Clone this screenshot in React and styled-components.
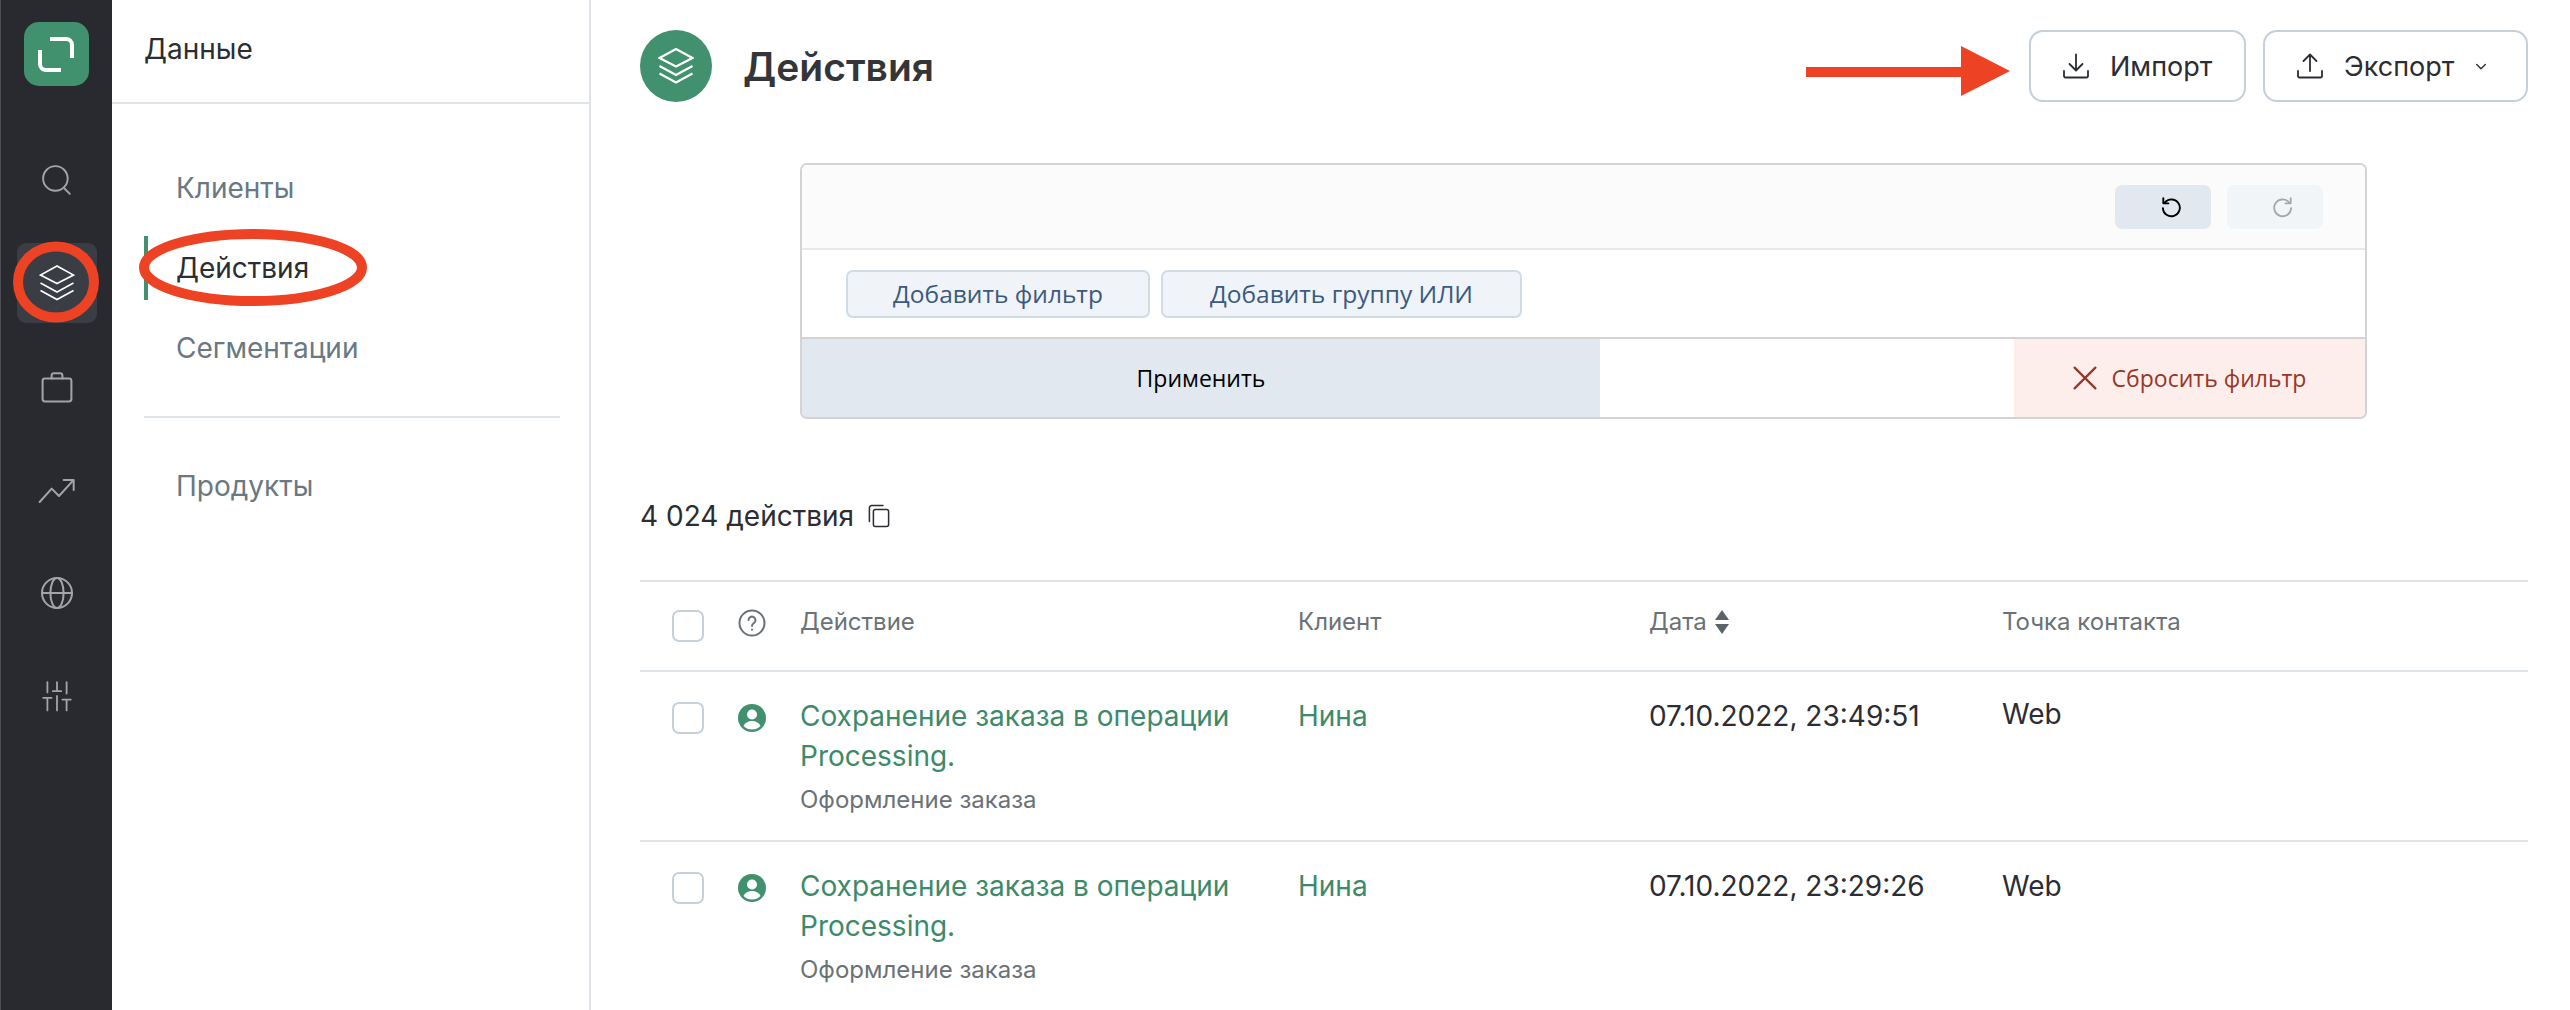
import React from "react";
import styled, { createGlobalStyle } from "styled-components";

const GREEN = "#41906e";
const BORDER = "#dfe4e8";

const Global = createGlobalStyle`
    html, body {
        margin: 0;
        padding: 0;
        background: #fff;
    }
    body {
        font-family: Inter, "Noto Sans", sans-serif;
        color: #2b2d33;
    }
    * {
        box-sizing: border-box;
    }
`;

const Page = styled.div`
    position: relative;
    display: flex;
    width: 2570px;
    height: 1010px;
    overflow: hidden;
`;

const Sidebar = styled.aside`
    flex: 0 0 112px;
    display: flex;
    flex-direction: column;
    align-items: center;
    background: #282a30;
    border-left: 1px solid #4c4e54;
    padding-top: 22px;
`;

const Logo = styled.div`
    width: 65px;
    height: 64px;
    border-radius: 15px;
    background: ${GREEN};
    margin-bottom: 54px;
    display: flex;
`;

const SideList = styled.nav`
    display: flex;
    flex-direction: column;
    gap: 23.3px;
`;

const SideItem = styled.div`
    width: 80px;
    height: 80px;
    border-radius: 9px;
    display: flex;
    align-items: center;
    justify-content: center;
    color: ${(p) => (p.$active ? "#fff" : "#a3a4a8")};
    background: ${(p) => (p.$active ? "#3a3d44" : "transparent")};
`;

const Panel = styled.section`
    flex: 0 0 479px;
    border-right: 2px solid ${BORDER};
`;

const PanelHead = styled.div`
    height: 104px;
    padding: 0 0 4px 32px;
    display: flex;
    align-items: center;
    border-bottom: 2px solid ${BORDER};
    font-size: 28px;
`;

const PanelNav = styled.div`
    padding: 52px 29px 0 32px;
`;

const NavItem = styled.div`
    height: 64px;
    margin-bottom: 16px;
    display: flex;
    align-items: center;
    font-size: 28px;
    padding-left: 28px;
    border-left: 4px solid ${(p) => (p.$active ? GREEN : "transparent")};
    color: ${(p) => (p.$active ? "#2b2d33" : "#6a7882")};
`;

const NavDivider = styled.div`
    height: 2px;
    background: ${BORDER};
    margin: 36px 0 36px;
`;

const Main = styled.main`
    flex: 1;
    min-width: 0;
    padding: 30px 42px 0 49px;
`;

const TopBar = styled.header`
    display: flex;
    align-items: center;
    height: 72px;
`;

const TitleIcon = styled.div`
    width: 72px;
    height: 72px;
    border-radius: 50%;
    background: ${GREEN};
    color: #fff;
    display: flex;
    align-items: center;
    justify-content: center;
    margin-right: 31px;
`;

const Title = styled.h1`
    margin: 0;
    font-size: 39px;
    font-weight: 600;
    color: #333538;
`;

const TopActions = styled.div`
    margin-left: auto;
    display: flex;
    gap: 17px;
`;

const OutlineButton = styled.button`
    width: ${(p) => p.$width}px;
    height: 72px;
    border: 2px solid #c5d0da;
    border-radius: 14px;
    background: #fff;
    font: inherit;
    font-size: 27px;
    color: #2b2d33;
    display: flex;
    align-items: center;
    padding: 0 0 0 30px;
    gap: 19px;
`;

const FilterBox = styled.div`
    margin: 61px 0 0 160px;
    width: 1567px;
    height: 256px;
    border: 2px solid #d3d3d3;
    border-radius: 7px;
    overflow: hidden;
    display: flex;
    flex-direction: column;
    font-family: "Open Sans", "Noto Sans", sans-serif;
`;

const HistoryRow = styled.div`
    height: 85px;
    background: #fbfbfb;
    border-bottom: 2px solid #e4e9ee;
    display: flex;
    justify-content: flex-end;
    align-items: center;
    gap: 16px;
    padding: 0 42px 0 0;
`;

const HistoryButton = styled.div`
    width: 96px;
    height: 44px;
    border-radius: 7px;
    background: ${(p) => (p.$disabled ? "#f2f5f7" : "#e1e8ef")};
    color: ${(p) => (p.$disabled ? "#a8a8a8" : "#000")};
    display: flex;
    align-items: center;
    justify-content: center;
    padding-left: 16px;
`;

const RuleRow = styled.div`
    flex: 1;
    display: flex;
    align-items: center;
    gap: 11px;
    padding-left: 44px;
`;

const RuleButton = styled.div`
    width: ${(p) => p.$width}px;
    height: 48px;
    border: 2px solid #cfdbe6;
    border-radius: 7px;
    background: #f0f4f8;
    color: #3a5a80;
    font-size: 24.5px;
    display: flex;
    align-items: center;
    justify-content: center;
`;

const FilterFooter = styled.div`
    height: 80px;
    border-top: 2px solid #d3d3d3;
    display: flex;
    font-size: 23px;
`;

const ApplyButton = styled.div`
    width: 798px;
    background: #e1e8ef;
    color: #000;
    display: flex;
    align-items: center;
    justify-content: center;
`;

const ResetButton = styled.div`
    margin-left: auto;
    width: 351px;
    background: #fdeeeb;
    color: #96372a;
    display: flex;
    align-items: center;
    justify-content: center;
    gap: 15px;
`;

const CountRow = styled.div`
    margin-top: 81px;
    height: 32px;
    display: flex;
    align-items: center;
    gap: 13px;
    font-size: 28px;
    color: #2b2d33;
`;

const Table = styled.div`
    margin-top: 48px;
    border-top: 2px solid ${BORDER};
`;

const Row = styled.div`
    display: grid;
    grid-template-columns: 66px 62px 498px 351px 353px 1fr;
    align-items: start;
    padding-left: 32px;
    height: ${(p) => p.$height}px;
    border-bottom: ${(p) => (p.$last ? "none" : `2px solid ${BORDER}`)};
`;

const Checkbox = styled.div`
    width: 32px;
    height: 32px;
    margin-top: ${(p) => p.$top}px;
    border: 2px solid #c5d0da;
    border-radius: 7px;
    background: #fff;
`;

const IconCell = styled.div`
    margin-top: ${(p) => p.$top}px;
    color: ${(p) => p.$color};
    line-height: 0;
`;

const HeadCell = styled.div`
    padding-top: 23px;
    line-height: 34px;
    font-size: 24px;
    color: #6a7276;
    display: flex;
    align-items: center;
    gap: 8px;
`;

const ActionCell = styled.div`
    padding-top: 24px;
`;

const ActionLink = styled.div`
    font-size: 28px;
    line-height: 40px;
    color: #3d8a6a;
`;

const ActionType = styled.div`
    margin-top: 8px;
    font-size: 24px;
    line-height: 32px;
    color: #6a7276;
`;

const ClientCell = styled.div`
    padding-top: 24px;
    font-size: 28px;
    line-height: 40px;
    color: #3d8a6a;
`;

const DataCell = styled.div`
    padding-top: ${(p) => p.$top}px;
    font-size: 28px;
    line-height: 40px;
    color: #2b2d33;
`;

const Annotations = styled.svg`
    position: absolute;
    inset: 0;
    pointer-events: none;
`;

const Line = ({ size = 30, w = 2, children }) => (
    <svg width={size} height={size} viewBox="0 0 30 30" fill="none" stroke="currentColor" strokeWidth={w} strokeLinecap="round" strokeLinejoin="round">
        {children}
    </svg>
);

const LayersIcon = ({ w = 1.6 }) => (
    <svg width="36" height="36" viewBox="0 0 36 36" fill="none" stroke="currentColor" strokeWidth={w} strokeLinejoin="miter">
        <path d="M18 1 34.500 10 18 18.500 1.500 10Z" />
        <path d="M1.500 18 18 27 34.500 18" />
        <path d="M1.500 25.500 18 34.500 34.500 25.500" />
    </svg>
);

const rows = [
    { date: "07.10.2022, 23:49:51", webTop: 22 },
    { date: "07.10.2022, 23:29:26", webTop: 24 },
];

const App = () => (
    <Page>
        <Global />
        <Sidebar>
            <Logo>
                <svg width="65" height="64" viewBox="0 0 65 64" fill="none" stroke="#fff" strokeWidth="4" strokeLinecap="butt">
                    <path d="M26 17H42a6 6 0 0 1 6 6V36" />
                    <path d="M16 28V42a6 6 0 0 0 6 6H37" />
                </svg>
            </Logo>
            <SideList>
                <SideItem>
                    <Line size={32} w={1.8}>
                        <circle cx="13.5" cy="13.5" r="11.5" />
                        <path d="M22 23 27 28" />
                    </Line>
                </SideItem>
                <SideItem $active>
                    <LayersIcon />
                </SideItem>
                <SideItem>
                    <Line size={36} w={1.7}>
                        <rect x="3" y="8" width="24" height="19" rx="2" />
                        <path d="M10.5 8V5.5a2 2 0 0 1 2-2h5a2 2 0 0 1 2 2V8" />
                    </Line>
                </SideItem>
                <SideItem>
                    <Line size={40} w={1.5}>
                        <path d="M2 24 11 14 16.5 19.5 27 8" />
                        <path d="M20 7.5H27.5V15" />
                    </Line>
                </SideItem>
                <SideItem>
                    <Line size={36} w={1.7}>
                        <circle cx="15" cy="15" r="12.5" />
                        <ellipse cx="15" cy="15" rx="5.5" ry="12.5" />
                        <path d="M2.5 15H27.5" />
                    </Line>
                </SideItem>
                <SideItem>
                    <Line size={36} w={1.5}>
                        <path d="M7 3.5V12M7 16.500V27M3.500 16.500H10.500" />
                        <path d="M15 3.500V11M11.500 11H18.500M15 15V27" />
                        <path d="M23 3.500V13M23 18V27M19.500 18H26.500" />
                    </Line>
                </SideItem>
            </SideList>
        </Sidebar>

        <Panel>
            <PanelHead>Данные</PanelHead>
            <PanelNav>
                <NavItem>Клиенты</NavItem>
                <NavItem $active>Действия</NavItem>
                <NavItem>Сегментации</NavItem>
                <NavDivider />
                <NavItem>Продукты</NavItem>
            </PanelNav>
        </Panel>

        <Main>
            <TopBar>
                <TitleIcon>
                    <LayersIcon w={2.2} />
                </TitleIcon>
                <Title>Действия</Title>
                <TopActions>
                    <OutlineButton $width={217}>
                        <Line size={30} w={1.8}>
                            <path d="M15 3.500V19M8.500 13 15 19.500 21.500 13" />
                            <path d="M3 20V25a1.500 1.500 0 0 0 1.500 1.500h21A1.500 1.500 0 0 0 27 25V20" />
                        </Line>
                        Импорт
                    </OutlineButton>
                    <OutlineButton $width={265}>
                        <Line size={30} w={1.8}>
                            <path d="M15 20V3.500M8.500 10 15 3.500 21.500 10" />
                            <path d="M3 20V25a1.500 1.500 0 0 0 1.500 1.500h21A1.500 1.500 0 0 0 27 25V20" />
                        </Line>
                        Экспорт
                        <Line size={16} w={2.6}>
                            <path d="M7 12 15 20 23 12" />
                        </Line>
                    </OutlineButton>
                </TopActions>
            </TopBar>

            <FilterBox>
                <HistoryRow>
                    <HistoryButton>
                        <Line size={22} w={2.6}>
                            <path d="M6.500 9A11.500 11.500 0 1 1 4 16.500" />
                            <path d="M4.500 3V10H11.500" />
                        </Line>
                    </HistoryButton>
                    <HistoryButton $disabled>
                        <Line size={22} w={2.6}>
                            <path d="M23.500 9A11.500 11.500 0 1 0 26 16.500" />
                            <path d="M25.500 3V10H18.500" />
                        </Line>
                    </HistoryButton>
                </HistoryRow>
                <RuleRow>
                    <RuleButton $width={304}>Добавить фильтр</RuleButton>
                    <RuleButton $width={361}>Добавить группу ИЛИ</RuleButton>
                </RuleRow>
                <FilterFooter>
                    <ApplyButton>Применить</ApplyButton>
                    <ResetButton>
                        <Line size={24} w={2.8}>
                            <path d="M2 2 28 28M28 2 2 28" />
                        </Line>
                        Сбросить фильтр
                    </ResetButton>
                </FilterFooter>
            </FilterBox>

            <CountRow>
                4 024 действия
                <Line size={24} w={1.9}>
                    <rect x="8" y="7" width="19" height="21" rx="2.500" />
                    <path d="M3 22V5a3 3 0 0 1 3-3H20" />
                </Line>
            </CountRow>

            <Table>
                <Row $height={90}>
                    <Checkbox $top={28} />
                    <IconCell $top={27} $color="#6a7276">
                        <svg width="28" height="28" viewBox="0 0 28 28" fill="none" stroke="currentColor" strokeWidth="2" strokeLinecap="round">
                            <circle cx="14" cy="14" r="12.500" />
                            <path d="M10.500 11a3.500 3.500 0 1 1 5.500 3c-1.300.9-2 1.600-2 3" />
                            <path d="M14 20.500v.2" />
                        </svg>
                    </IconCell>
                    <HeadCell>Действие</HeadCell>
                    <HeadCell>Клиент</HeadCell>
                    <HeadCell>
                        Дата
                        <svg width="14" height="24" viewBox="0 0 14 24" fill="#5a6468">
                            <path d="M7 0 14 10H0Z" />
                            <path d="M0 14H14L7 24Z" />
                        </svg>
                    </HeadCell>
                    <HeadCell>Точка контакта</HeadCell>
                </Row>
                {rows.map((row, i) => (
                    <Row key={row.date} $height={170} $last={i === rows.length - 1}>
                        <Checkbox $top={30} />
                        <IconCell $top={32} $color={GREEN}>
                            <svg width="28" height="28" viewBox="0 0 28 28">
                                <circle cx="14" cy="14" r="14" fill="currentColor" />
                                <circle cx="14" cy="10.500" r="5" fill="#fff" />
                                <path d="M5.500 22c1.500-3.500 5-5 8.500-5s7 1.500 8.500 5a12 12 0 0 1-17 0Z" fill="#fff" />
                            </svg>
                        </IconCell>
                        <ActionCell>
                            <ActionLink>
                                Сохранение заказа в операции
                                <br />
                                Processing.
                            </ActionLink>
                            <ActionType>Оформление заказа</ActionType>
                        </ActionCell>
                        <ClientCell>Нина</ClientCell>
                        <DataCell $top={24}>{row.date}</DataCell>
                        <DataCell $top={row.webTop}>Web</DataCell>
                    </Row>
                ))}
            </Table>
        </Main>

        <Annotations width="2570" height="1010" viewBox="0 0 2570 1010" fill="none">
            <ellipse cx="56" cy="282" rx="38" ry="35.500" stroke="#ee4224" strokeWidth="10" />
            <ellipse cx="253" cy="267.500" rx="109" ry="33.500" stroke="#ee4224" strokeWidth="10" />
            <path d="M1806 67H1961V46L2010 71 1961 96V77H1806Z" fill="#ee4224" />
        </Annotations>
    </Page>
);

export default App;
